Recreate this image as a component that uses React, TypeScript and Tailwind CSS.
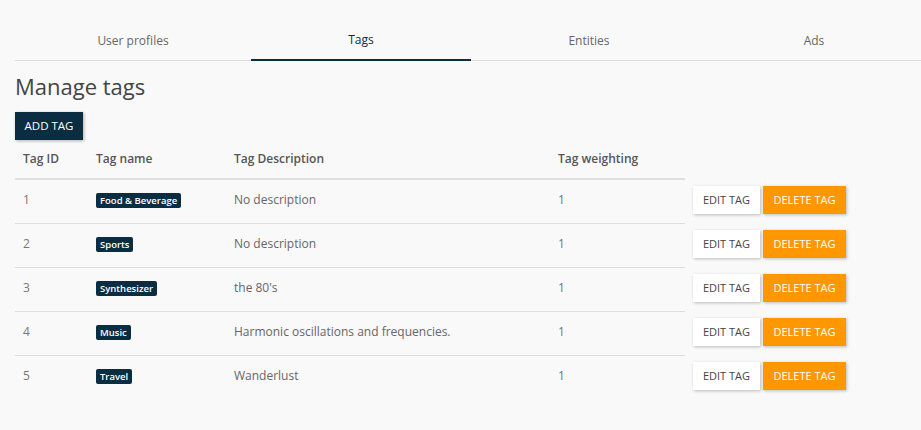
const tabs = [
  { label: "User profiles", width: "w-[236px]" },
  { label: "Tags", width: "w-[220px]" },
  { label: "Entities", width: "w-[236px]" },
  { label: "Ads", width: "flex-1" },
];

const tags = [
  { id: 1, name: "Food & Beverage", description: "No description", weighting: 1 },
  { id: 2, name: "Sports", description: "No description", weighting: 1 },
  { id: 3, name: "Synthesizer", description: "the 80's", weighting: 1 },
  { id: 4, name: "Music", description: "Harmonic oscillations and frequencies.", weighting: 1 },
  { id: 5, name: "Travel", description: "Wanderlust", weighting: 1 },
];

function Tabs() {
  return (
    <div className="ml-[15px] flex border-b border-[#dedede]">
      {tabs.map((tab) => (
        <div
          key={tab.label}
          className={
            tab.label === "Tags"
              ? `${tab.width} flex h-[61px] items-center justify-center pt-[21px] text-[12px] text-[#0b2d42] border-b-2 border-[#0b2d42] -mb-[1px]`
              : `${tab.width} flex h-[60px] items-center justify-center pt-[22px] text-[12px] text-[#666]`
          }
        >
          {tab.label}
        </div>
      ))}
    </div>
  );
}

export default function App() {
  return (
    <div className="min-h-[430px] bg-[#f9f9f9] font-['Open_Sans',sans-serif]">
      <Tabs />
      <div className="px-[15px]">
        <h1 className="mt-[11px] text-[22px] leading-[28px] text-[#444]">Manage tags</h1>
        <button className="mt-[12px] h-[28px] w-[68px] bg-[#0b2d42] text-[11.5px] text-white shadow-[1px_1px_3px_rgba(0,0,0,0.3)]">
          ADD TAG
        </button>

        <div className="flex">
          <div className="w-[670px]">
            <div className="flex h-[40px] items-center border-b-2 border-[#dedede] text-[12px] font-semibold text-[#555]">
              <div className="w-[73px] pl-2">Tag ID</div>
              <div className="w-[138px] pl-2">Tag name</div>
              <div className="w-[324px] pl-2">Tag Description</div>
              <div className="pl-2">Tag weighting</div>
            </div>
            {tags.map((tag, index) => (
              <div
                key={tag.id}
                className={
                  "flex h-[44px] items-center pb-[4px] text-[12px] text-[#666]" +
                  (index < tags.length - 1 ? " border-b border-[#dedede]" : "")
                }
              >
                <div className="w-[73px] pl-2 text-[#777]">{tag.id}</div>
                <div className="w-[138px] pl-2">
                  <span className="inline-block rounded-[2px] bg-[#0b2d42] px-[4px] text-[9.5px] leading-[15px] font-semibold text-white">
                    {tag.name}
                  </span>
                </div>
                <div className="w-[324px] pl-2">{tag.description}</div>
                <div className="pl-2 text-[#777]">{tag.weighting}</div>
              </div>
            ))}
          </div>
          <div className="pt-[38px] pl-[8px]">
            {tags.map((tag) => (
              <div key={tag.id} className="flex h-[44px] items-center gap-[3px]">
                <button className="h-[28px] w-[67px] bg-white text-[11px] text-[#444] shadow-[1px_1px_3px_rgba(0,0,0,0.25)]">
                  EDIT TAG
                </button>
                <button className="h-[28px] w-[83px] bg-[#ff9800] text-[11px] text-white shadow-[1px_1px_3px_rgba(0,0,0,0.25)]">
                  DELETE TAG
                </button>
              </div>
            ))}
          </div>
        </div>
      </div>
    </div>
  );
}
